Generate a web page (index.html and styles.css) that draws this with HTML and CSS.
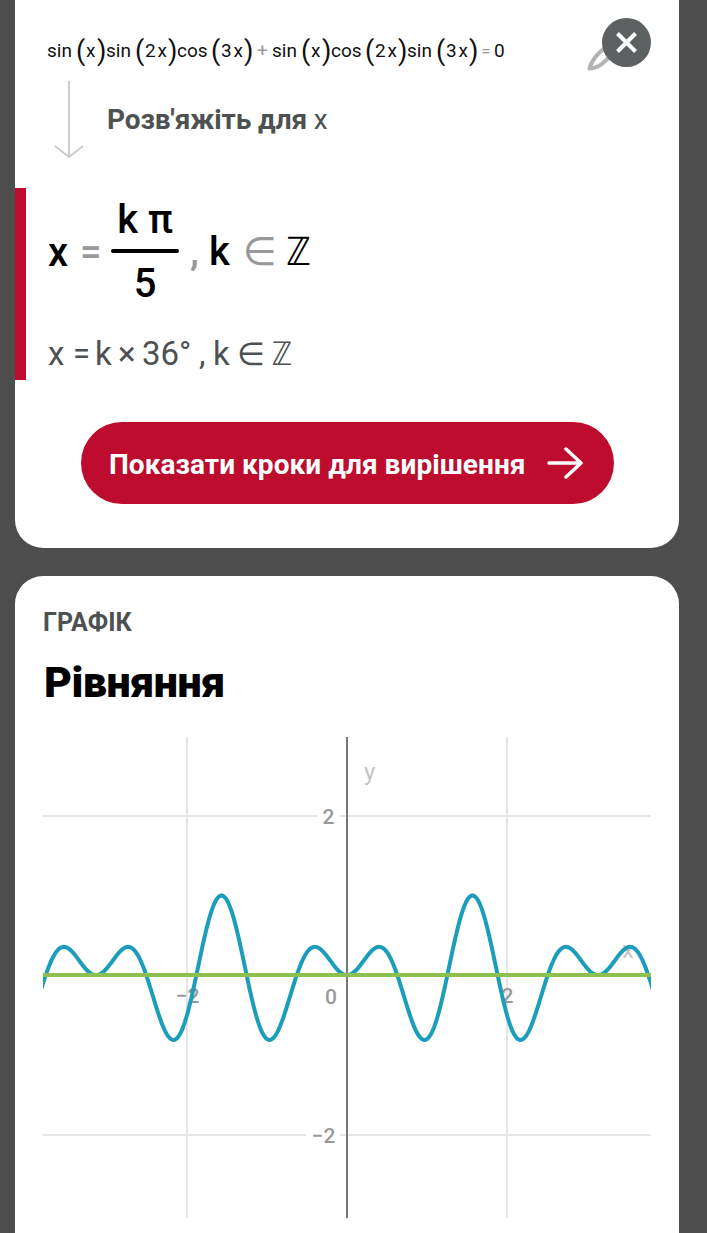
FILE: index.html
```
<!DOCTYPE html>
<html lang="uk">
<head>
    <meta charset="UTF-8">
    <meta name="viewport" content="width=device-width, initial-scale=1.0">
    <title>Рівняння</title>
    <link rel="stylesheet" href="styles.css">
</head>
<body>
    <div class="card solution">
        <div class="equation">
            <span class="fn">sin</span><span class="paren">(</span><span class="arg short">x</span><span class="paren">)</span>
            <span class="fn">sin</span><span class="paren">(</span><span class="arg">2<i>x</i></span><span class="paren">)</span>
            <span class="fn cos">cos</span><span class="paren">(</span><span class="arg">3<i>x</i></span><span class="paren">)</span>
            <span class="op plus">+</span>
            <span class="fn">sin</span><span class="paren">(</span><span class="arg short">x</span><span class="paren">)</span>
            <span class="fn cos">cos</span><span class="paren">(</span><span class="arg">2<i>x</i></span><span class="paren">)</span>
            <span class="fn">sin</span><span class="paren">(</span><span class="arg">3<i>x</i></span><span class="paren">)</span>
            <span class="op equals">=</span>
            <span>0</span>
        </div>

        <div class="step">
            <svg class="down" width="30" height="78" viewBox="0 0 30 78">
                <path d="M15 0V76M1 65L15 76L29 65"/>
            </svg>
            <p><b>Розв'яжіть для</b> x</p>
        </div>

        <div class="result">
            <div class="answer">
                <span class="var">x</span>
                <span class="grey eq">=</span>
                <div class="fraction">
                    <span class="top">k π</span>
                    <span class="line"></span>
                    <span class="bottom">5</span>
                </div>
                <span class="grey comma">,</span>
                <span class="k">k</span>
                <span class="grey symbol in">∈</span>
                <span class="symbol integers">ℤ</span>
            </div>
            <div class="degrees">
                <span class="d-x">x</span>
                <span class="d-eq">=</span>
                <span class="d-k">k</span>
                <span class="d-times">×</span>
                <span class="d-num">36°</span>
                <span class="d-comma">,</span>
                <span class="d-k2">k</span>
                <span class="symbol in">∈</span>
                <span class="symbol integers">ℤ</span>
            </div>
        </div>

        <button class="steps-button" type="button">
            <span>Показати кроки для вирішення</span>
            <svg width="36" height="34" viewBox="0 0 36 34">
                <path d="M2 17H34M19 3L34 17L19 31"/>
            </svg>
        </button>

        <svg class="pencil" width="40" height="40" viewBox="0 0 40 40">
            <path d="M3.500 32.500C5 27 8 22 13 17L26 5L33 12L17 27C13 30.500 8 32.500 3.500 32.500Z"/>
        </svg>
        <button class="close" type="button" aria-label="Закрити">
            <svg width="49" height="49" viewBox="0 0 49 49">
                <path d="M15.500 15.500L33.500 33.500M33.500 15.500L15.500 33.500"/>
            </svg>
        </button>
    </div>

    <div class="card graph">
        <h3>ГРАФІК</h3>
        <h2>Рівняння</h2>
        <svg class="plot" width="608" height="481" viewBox="0 0 608 481">
            <path class="grid" d="M144 0V481M464 0V481M0 79H275M297 79H608M0 398H263M297 398H608"/>
            <path class="axis" d="M304 0V481"/>
            <text class="tick" x="291.500" y="87" text-anchor="end">2</text>
            <text class="tick" x="292.500" y="406" text-anchor="end">−2</text>
            <text class="tick" x="144.500" y="266" text-anchor="middle">−2</text>
            <text class="tick" x="464.500" y="266" text-anchor="middle">2</text>
            <text class="tick" x="288" y="267" text-anchor="middle">0</text>
            <text class="name" x="321" y="43">y</text>
            <text class="name" x="579" y="221">x</text>
            <path id="curve" class="curve"/>
            <path class="zero" d="M0 238H608"/>
        </svg>
    </div>

    <script>
        // sin(x)sin(2x)cos(3x) + sin(x)cos(2x)sin(3x), 80px per unit
        var points = [];
        for (var px = -2; px <= 610; px++) {
            var x = (px - 304) / 79.9;
            var y = Math.sin(x) * Math.sin(2 * x) * Math.cos(3 * x) + Math.sin(x) * Math.cos(2 * x) * Math.sin(3 * x);
            points.push(px + ' ' + (238 - y * 79.5).toFixed(2));
        }
        document.getElementById('curve').setAttribute('d', 'M' + points.join('L'));
    </script>
</body>
</html>
```
FILE: styles.css
```
* {
    box-sizing: border-box;
}

body {
    font-family: Roboto, "DejaVu Sans", sans-serif;
    margin: 0;
    height: 1233px;
    overflow: hidden;
    background-color: #4d4d4d;
}

.card {
    width: 664px;
    margin-left: 15px;
    background-color: #ffffff;
}

.solution {
    position: relative;
    height: 548px;
    padding-top: 31px;
    border-radius: 0 0 28px 28px;
}

.equation {
    display: flex;
    align-items: center;
    height: 40px;
    padding-left: 32px;
    font-size: 19px;
    line-height: 40px;
    color: #111111;
}

.fn {
    width: 29px;
}

.cos {
    width: 34px;
}

.paren {
    width: 9px;
    font-size: 27px;
    line-height: 36px;
    text-align: center;
}

.arg {
    display: flex;
    justify-content: space-between;
    width: 24px;
    padding: 0 1px;
}

.arg i {
    font-style: normal;
}

.short {
    width: 12px;
}

.op {
    text-align: center;
    color: #999999;
}

.plus {
    width: 19px;
}

.equals {
    width: 16px;
    font-size: 17px;
}

.step {
    display: flex;
    height: 117px;
    padding: 10px 0 0 39px;
}

.down {
    fill: none;
    stroke: #cccccc;
    stroke-width: 2;
}

.step p {
    margin: 21px 0 0 23px;
    font-size: 28px;
    line-height: 36px;
    letter-spacing: -0.1px;
    color: #4d5151;
}

.result {
    height: 192px;
    padding-left: 22px;
    border-left: 11px solid #be0c2f;
}

.answer {
    display: flex;
    height: 127px;
    align-items: center;
    font-size: 40px;
    font-weight: 500;
    line-height: 48px;
    color: #000000;
}

.answer span {
    flex-shrink: 0;
}

.answer .var {
    width: 32px;
    padding-top: 2px;
}

.answer .eq {
    width: 31px;
    font-size: 38px;
}

.grey {
    color: #999999;
}

.fraction {
    display: flex;
    flex-direction: column;
    align-items: center;
    width: 68px;
}

.fraction .line {
    width: 68px;
    height: 4px;
    margin: 5px 0 7px;
    border-radius: 2px;
    background-color: #000000;
}

.comma {
    width: 30px;
    padding-left: 11px;
}

.answer .k {
    width: 35px;
}

.symbol {
    font-family: "DejaVu Sans", sans-serif;
    font-weight: 400;
}

.answer .in {
    width: 43px;
    font-size: 39px;
    line-height: 44px;
    margin-left: -1px;
}

.answer .integers {
    font-size: 39px;
    transform: scaleX(0.85);
    transform-origin: left;
}

.degrees {
    display: flex;
    align-items: center;
    height: 78px;
    font-size: 33px;
    line-height: 40px;
    color: #4d5151;
}

.d-x {
    width: 25px;
}

.d-eq {
    width: 22px;
    font-size: 31px;
}

.d-k {
    width: 23px;
}

.d-times {
    width: 24px;
}

.d-num {
    width: 57px;
}

.d-comma {
    width: 14px;
}

.d-k2 {
    width: 24px;
}

.degrees .in {
    width: 35px;
}

.degrees .symbol {
    font-size: 32px;
}

.degrees .integers {
    transform: scaleX(0.85);
    transform-origin: left;
}

.steps-button {
    display: flex;
    align-items: center;
    justify-content: space-between;
    width: 533px;
    height: 82px;
    margin: 42px 0 0 66px;
    padding: 0 31px 0 28px;
    border: none;
    border-radius: 41px;
    background-color: #be0c2f;
    color: #ffffff;
    font-family: Roboto, sans-serif;
    font-size: 28px;
    font-weight: 700;
    letter-spacing: 0.05px;
    white-space: nowrap;
}

.steps-button span {
    padding-top: 2px;
}

.steps-button path {
    fill: none;
    stroke: #ffffff;
    stroke-width: 3.5;
    stroke-linecap: round;
    stroke-linejoin: round;
}

.pencil {
    position: absolute;
    top: 36px;
    left: 571px;
    fill: none;
    stroke: #b3b3b3;
    stroke-width: 4;
    stroke-linejoin: round;
}

.close {
    position: absolute;
    top: 18px;
    left: 587px;
    width: 49px;
    height: 49px;
    padding: 0;
    border: none;
    border-radius: 50%;
    background-color: #5d6162;
}

.close svg {
    display: block;
    stroke: #ffffff;
    stroke-width: 4;
}

.graph {
    height: 700px;
    margin-top: 28px;
    padding: 32px 28px 0;
    border-radius: 28px 28px 0 0;
}

h3 {
    margin: 0;
    font-size: 25px;
    line-height: 30px;
    color: #4d5151;
}

h2 {
    margin: 18px 0 0 1px;
    font-size: 43px;
    font-weight: 900;
    line-height: 52px;
    letter-spacing: -0.5px;
    color: #000000;
}

.plot {
    display: block;
    margin-top: 29px;
}

.grid {
    stroke: #e5e5e5;
    stroke-width: 2;
}

.axis {
    stroke: #777777;
    stroke-width: 2;
}

.tick {
    font-size: 21px;
    font-weight: 500;
    fill: #999999;
}

.name {
    font-size: 24px;
    fill: #c4c4c4;
}

.curve {
    fill: none;
    stroke: #1c9dbb;
    stroke-width: 4;
}

.zero {
    stroke: #8cc152;
    stroke-width: 4;
}
```
